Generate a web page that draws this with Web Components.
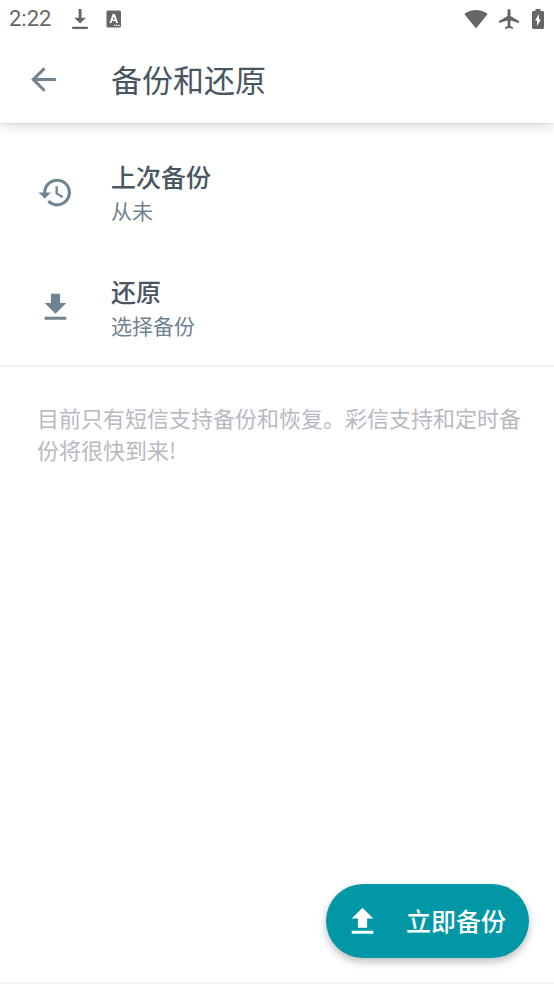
<!DOCTYPE html>
<html lang="zh-CN">
<head>
<meta charset="utf-8">
<meta name="viewport" content="width=device-width, initial-scale=1">
<title>备份和还原</title>
<style>
  body { margin: 0; background: #fff; font-family: "Noto Sans CJK SC", sans-serif; }
</style>
</head>
<body>
<backup-screen></backup-screen>

<script>
const define = (name, html) => {
  const template = document.createElement('template');
  template.innerHTML = html;
  customElements.define(name, class extends HTMLElement {
    constructor() {
      super();
      this.attachShadow({ mode: 'open' }).append(template.content.cloneNode(true));
    }
  });
};

const ICONS = {
  back: '<path d="M20 11H7.800l5.600-5.600L12 4l-8 8 8 8 1.400-1.400L7.800 13H20z"/>',
  history: '<path d="M13 3a9 9 0 0 0-9 9H1l3.900 3.900.070.140L9 12H6a7 7 0 1 1 2.060 4.940l-1.420 1.420A9 9 0 1 0 13 3zm-1 5v5l4.280 2.540.72-1.210-3.500-2.080V8z"/>',
  download: '<path d="M19 9h-4V3H9v6H5l7 7zM5 18v2h14v-2z"/>',
  upload: '<path d="M9 16h6v-6h4l-7-7-7 7h4zM5 18h14v2H5z"/>',
  saved: '<path d="M10.600 2h2.900v8.700H18l-5.900 5.800-5.900-5.800h4.400zM4.200 19.700h15.600v2.200H4.200z"/>',
  keyboard: '<path fill-rule="evenodd" d="M6 3.500h11.500A1.500 1.500 0 0 1 19 5v14a1.500 1.500 0 0 1-1.500 1.500H6A1.500 1.500 0 0 1 4.500 19V5A1.500 1.500 0 0 1 6 3.500zM10.700 7l-3.200 9h2.100l.6-1.900h3.200l.6 1.900h2.100l-3.200-9zm1.100 2.500 1 3h-2zM12 17.700V19h1.300v-1.300zm2.200 0V19h1.300v-1.300zm2.200 0V19h1.300v-1.300z"/>',
  wifi: '<path d="M12 21.500 23.700 7C23.200 6.600 18.600 3 12 3S.8 6.600.3 7z"/>',
  plane: '<path d="M22 16v-2l-8.500-5V3.500a1.500 1.500 0 0 0-3 0V9L2 14v2l8.500-2.500V19L8 20.500V22l4-1 4 1v-1.500L13.500 19v-5.500z"/>',
  battery: '<path fill-rule="evenodd" d="M16.700 4H14.500V2h-5v2H7.300C6.600 4 6 4.600 6 5.300v15.300c0 .8.600 1.400 1.300 1.400h9.300c.8 0 1.400-.6 1.400-1.300V5.300C18 4.600 17.400 4 16.700 4zM11 19v-5.500H9L13 7v5.500h2z"/>'
};

customElements.define('app-icon', class extends HTMLElement {
  constructor() {
    super();
    this.attachShadow({ mode: 'open' });
  }
  connectedCallback() {
    this.shadowRoot.innerHTML = `
      <style>
        :host { display: block; flex: none; width: var(--icon-size, 37px); height: var(--icon-size, 37px); }
        svg { display: block; width: 100%; height: 100%; fill: currentColor; }
      </style>
      <svg viewBox="0 0 24 24" aria-hidden="true">${ICONS[this.getAttribute('name')]}</svg>`;
  }
});

define('status-bar', `
  <style>
    :host { display: flex; align-items: center; justify-content: space-between;
      height: 37px; padding: 0 4px 0 9px; box-sizing: border-box; color: #666; --icon-size: 24px; }
    div { display: flex; align-items: center; }
    .left { gap: 10px; }
    .right { gap: 9px; }
    time { font-family: Roboto, sans-serif; font-size: 22px; line-height: 38px; margin-right: 7px; }
    .right app-icon:last-child { margin-left: -4px; }
  </style>
  <div class="left">
    <time>2:22</time>
    <app-icon name="saved"></app-icon>
    <app-icon name="keyboard"></app-icon>
  </div>
  <div class="right">
    <app-icon name="wifi"></app-icon>
    <app-icon name="plane"></app-icon>
    <app-icon name="battery"></app-icon>
  </div>`);

define('app-bar', `
  <style>
    :host { display: flex; align-items: center; height: 86px; padding: 0 25px 2px; gap: 49px; box-sizing: border-box; }
    button { all: unset; color: #708390; cursor: pointer; }
    h1 { margin: 0; font-size: 31px; line-height: 40px; font-weight: 400; color: #49565f; }
  </style>
  <button type="button" aria-label="返回"><app-icon name="back"></app-icon></button>
  <h1><slot></slot></h1>`);

define('setting-row', `
  <style>
    :host { display: block; }
    button { all: unset; display: flex; align-items: center; gap: 37px; width: 100%; min-height: 115px;
      padding: 0 37px; box-sizing: border-box; color: #708390; cursor: pointer; }
    .text { display: flex; flex-direction: column; padding-bottom: 2px; }
    .title { font-size: 25px; line-height: 36px; font-weight: 500; color: #49565f; }
    .summary { font-size: 21px; line-height: 32px; }
  </style>
  <button type="button">
    <slot name="icon"></slot>
    <span class="text">
      <span class="title"><slot></slot></span>
      <span class="summary"><slot name="summary"></slot></span>
    </span>
  </button>`);

define('action-button', `
  <style>
    :host { display: block; }
    button { all: unset; display: flex; align-items: center; gap: 25px; height: 74px; padding: 0 23px 0 18px;
      box-sizing: border-box; border-radius: 37px; background: #0097a7; color: #fff; cursor: pointer;
      font-size: 25px; line-height: 36px; font-weight: 500; box-shadow: 0 4px 8px rgba(0, 0, 0, .26); }
    span { padding-bottom: 2px; }
  </style>
  <button type="button"><slot name="icon"></slot><span><slot></slot></span></button>`);

define('backup-screen', `
  <style>
    :host { display: flex; flex-direction: column; min-height: 100vh; box-sizing: border-box; border-bottom: 2px solid #f2f2f2; }
    header { background: #fff; box-shadow: 0 1px 2px rgba(0, 0, 0, .06), 0 3px 12px rgba(0, 0, 0, .14); }
    main { flex: 1; display: flex; flex-direction: column; }
    section { padding-top: 12px; border-bottom: 2px solid #f2f2f2; }
    p { margin: 0; padding: 34px 24px 34px 37px; font-size: 22px; line-height: 32px; color: #b7b9c2; }
    footer { display: flex; justify-content: flex-end; margin-top: auto; padding: 24px 25px; }
  </style>
  <header>
    <status-bar></status-bar>
    <app-bar>备份和还原</app-bar>
  </header>
  <main>
    <section>
      <setting-row><app-icon slot="icon" name="history"></app-icon>上次备份<span slot="summary">从未</span></setting-row>
      <setting-row><app-icon slot="icon" name="download"></app-icon>还原<span slot="summary">选择备份</span></setting-row>
    </section>
    <p>目前只有短信支持备份和恢复。彩信支持和定时备份将很快到来!</p>
    <footer><action-button><app-icon slot="icon" name="upload"></app-icon>立即备份</action-button></footer>
  </main>`);
</script>
</body>
</html>
